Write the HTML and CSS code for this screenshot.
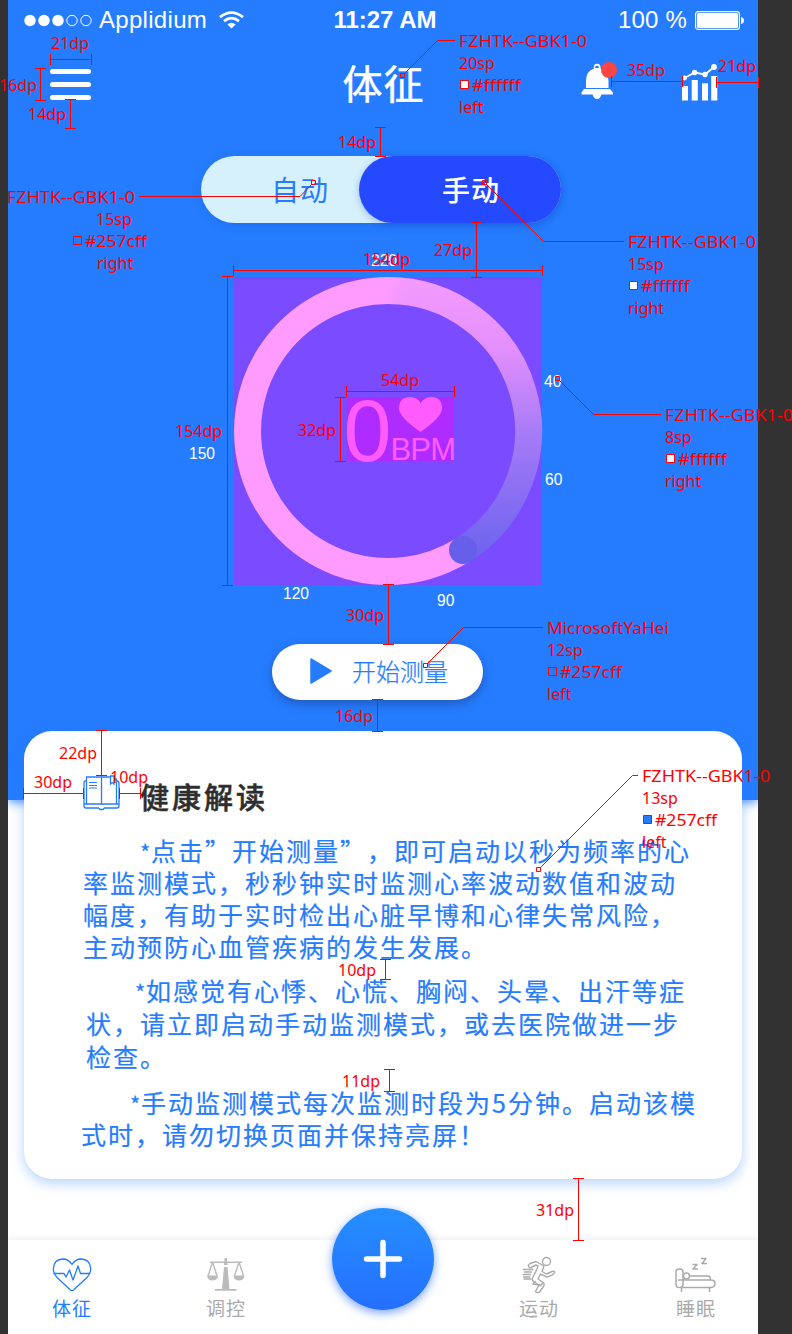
FILE: index.html
```html
<!DOCTYPE html>
<html lang="zh-CN">
<head>
<meta charset="utf-8">
<title>体征</title>
<link rel="stylesheet" href="styles.css">
</head>
<body>
<div class="phone">
  <section class="hero">
    <div class="status">
      <div class="carrier">
        <svg width="69" height="13" viewBox="0 0 69 13"><g fill="#fff"><circle cx="6" cy="6.500" r="5.700"/><circle cx="20" cy="6.500" r="5.700"/><circle cx="34" cy="6.500" r="5.700"/></g><g fill="none" stroke="#fff"><circle cx="48" cy="6.500" r="5.200"/><circle cx="62" cy="6.500" r="5.200"/></g></svg>
        <span>Applidium</span>
        <svg class="wifi" width="25" height="18" viewBox="0 0 25 18"><g fill="none" stroke="#fff" stroke-width="2.7"><path d="M1 6.1Q12.5-3 24 6.1"/><path d="M5 10.1Q12.500 4 20 10.100"/></g><path d="M8.400 13.500Q12.500 10.200 16.600 13.500L12.500 17.500Z" fill="#fff"/></svg>
      </div>
      <strong class="clock">11:27 AM</strong>
      <div class="battery"><span>100 %</span><svg width="49" height="19" viewBox="0 0 49 19"><rect x=".6" y=".6" width="43.800" height="17.800" rx="2.500" fill="none" stroke="#fff" stroke-width="1.200"/><rect x="2" y="2" width="41" height="15" rx="1.500" fill="#fff"/><path d="M46 6Q49 6.500 49 9.500T46 13Z" fill="#fff"/></svg></div>
    </div>
    <header class="nav">
      <div class="menu"><i></i><i></i><i></i></div>
      <h1>体征</h1>
      <div class="actions">
        <svg width="37" height="40" viewBox="0 0 37 40"><path d="M5 26V19Q5 9 13 6.500Q12 1.700 16 1.700T19.500 6.500Q27.500 9 27.500 19V26Z" fill="#fff"/><path d="M14 6Q14 3.500 16 3.500T18 6Z" fill="#257cff"/><path d="M3 27H29L32 30.500V32.500H.5V30.500Z" fill="#fff"/><path d="M11.500 32H20.500Q19.500 37 16 37T11.500 32Z" fill="#fff"/><circle cx="28" cy="8" r="8" fill="#f94545"/></svg>
        <svg width="36" height="40" viewBox="0 0 36 40"><g fill="#fff"><path d="M0 24H6V38.500H0ZM9.700 18H15.800V38.500H9.700ZM20 21.200H26V38.500H20ZM29.200 14H35.300V38.500H29.200Z"/><circle cx="2.500" cy="16" r="2.400"/><circle cx="12.600" cy="10.500" r="2.700"/><circle cx="23" cy="12.500" r="2.700"/><circle cx="32" cy="5" r="2.900"/></g><path d="M2.500 16L12.600 10.500L23 12.500L32 5" fill="none" stroke="#fff" stroke-width="1.800"/></svg>
      </div>
    </header>
    <div class="toggle"><span>自动</span><span class="on">手动</span></div>
    <svg class="gauge" width="400" height="368" viewBox="188 248 400 368">
      <defs><linearGradient id="fade" gradientUnits="userSpaceOnUse" x1="0" y1="277" x2="0" y2="560"><stop offset="0" stop-color="#f59bff"/><stop offset=".25" stop-color="#e38ffc"/><stop offset=".55" stop-color="#a77bf7"/><stop offset=".8" stop-color="#856df3"/><stop offset="1" stop-color="#6c63ee"/></linearGradient>
      <linearGradient id="join"><stop offset="0" stop-color="#ff9bff"/><stop offset="1" stop-color="#ff9bff" stop-opacity="0"/></linearGradient></defs>
      <rect x="234" y="277" width="308" height="308" fill="#7b4bff"/>
      <path d="M462.900 549.900A140.500 140.500 0 1 1 388 290.500" fill="none" stroke="#ff9bff" stroke-width="27"/>
      <path d="M386 290.510A140.500 140.500 0 0 1 462.900 549.900" fill="none" stroke="url(#fade)" stroke-width="27"/>
      <rect x="384" y="277.500" width="19" height="26.500" fill="url(#join)"/>
      <circle cx="463" cy="550" r="14" fill="#675eea"/>
      <rect x="347" y="397" width="107" height="64" fill="#ae2cff"/>
      <text class="zero" x="343.500" y="460.500" textLength="48" lengthAdjust="spacingAndGlyphs">0</text>
      <path d="M420.500 432Q399 417 399 408.500Q399 397 410 397Q418 397 420.500 403.500Q424 397 431 397Q442 397 442 408.500Q442 417 420.500 432Z" fill="#ff5bff"/>
      <text class="bpm" x="390.500" y="460" textLength="65.500">BPM</text>
      <g class="scale"><text x="371" y="266">220</text><text x="544" y="386.500">40</text><text x="545" y="485">60</text><text x="437" y="605.500">90</text><text x="283" y="599">120</text><text x="189" y="459">150</text></g>
    </svg>
    <div class="start"><svg width="22" height="26" viewBox="0 0 22 26"><path d="M1 1L21 13L1 25Z" fill="#257cff" stroke="#257cff" stroke-width="1.500" stroke-linejoin="round"/></svg><span>开始测量</span></div>
  </section>

  <article class="card">
    <h2><svg width="37" height="36" viewBox="0 0 37 36"><g fill="none" stroke="#257cff" stroke-width="1.300"><path d="M3.500 6H2.500Q1 6 1 8V31Q1 33 3 33H15.500L17 34.500H20L21.500 33H34Q36 33 36 31V8Q36 6 34 6"/><path d="M3.500 2H18.500V29H3.500ZM18.500 2H27M31 4H33.500V29H18.500M1 29H36"/><path d="M27.500 1H31V9L29.200 7.500L27.500 9Z"/><path d="M6 7.500H14M6 10.500H14M6 13H14" stroke-width="1"/></g></svg><span>健康解读</span></h2>
    <p class="p1"><b>*</b>点击”开始测量”，即可启动以秒为频率的心<br>率监测模式，秒秒钟实时监测心率波动数值和波动<br>幅度，有助于实时检出心脏早博和心律失常风险，<br>主动预防心血管疾病的发生发展。</p>
    <p class="p2"><b>*</b>如感觉有心悸、心慌、胸闷、头晕、出汗等症<br>状，请立即启动手动监测模式，或去医院做进一步<br>检查。</p>
    <p class="p3"><b>*</b>手动监测模式每次监测时段为5分钟。启动该模<br>式时，请勿切换页面并保持亮屏！</p>
  </article>

  <nav class="tabs">
    <div class="tab active"><svg width="40" height="36" viewBox="0 0 40 36"><g fill="none" stroke="#257cff" stroke-width="1.300" stroke-linejoin="round"><path d="M20 7.500Q16.500 2 11 2Q1.500 2.500 1.300 12Q1.500 17 5 20.500L18.500 33Q20 34 21.500 33L35 20.500Q38.500 17 38.700 12Q38.500 2.500 29 2Q23.500 2 20 7.500Z"/><path d="M1.500 16.500H12L14 20L17.500 13L21 23L26 9L28.500 16.500H38"/></g></svg><span>体征</span></div>
    <div class="tab balance"><svg width="40" height="36" viewBox="0 0 40 36"><g fill="#bbb"><path d="M18.500 1H21V4.500H36V6H21.500V8H18V6H4V4.500H18.500ZM18 10H21.500L23.500 32H30.500V33.800H9V32H16Z"/><path d="M1 18.500H12Q11.500 23.500 6.500 23.500T1 18.500ZM27.500 18.500H38.500Q38 23.500 33 23.500T27.500 18.500Z"/></g><path d="M6.500 5L2 19M6.500 5L11 19M33 5L28.500 19M33 5L37.500 19" fill="none" stroke="#bbb" stroke-width="1.400"/></svg><span>调控</span></div>
    <div class="fab"><svg width="40" height="40" viewBox="0 0 40 40"><path d="M20 3.500V36.500M3.500 20H36.500" stroke="#fff" stroke-width="5.500" stroke-linecap="round"/></svg></div>
    <div class="tab sport"><svg width="40" height="38" viewBox="0 0 40 38"><g fill="none" stroke="#aaa" stroke-width="1.400" stroke-linejoin="round" stroke-linecap="round"><circle cx="27.500" cy="5.500" r="4"/><path d="M10 11Q8.500 9 11 7.500L17 5.500L24 9.500Q25.500 11 24 12.500L23 15.500L27.500 18L33 15.500Q36 14.500 35.500 16.500Q35 18.500 28 21.200L21.500 18L19 23L24.500 27Q26 28.500 24.500 30.500L20.500 36Q17.500 37.500 16.500 35.500L20 29L14.500 25.500Q12.500 24 14 21L18 13L19 9.800L17 9L12 11.500Q10.500 12 10 11Z"/><path d="M16 25.500L14 28L21 29M24 27L21 30M4.500 13.500H14M5.500 16H12.500M4.500 18.500H11.500M4.500 21H11M5 23H12"/></g></svg><span>运动</span></div>
    <div class="tab sleep"><svg width="42" height="38" viewBox="0 0 42 38"><g fill="none" stroke="#aaa" stroke-width="1.500" stroke-linejoin="round"><rect x="1" y="13" width="7" height="18.500" rx="3.300"/><circle cx="11.500" cy="20" r="3"/><path d="M14.500 20H33Q35.500 20 35.500 24M3 24H36Q40 24 40 27.500T36 31.500H6M6.500 31.500V36M34.500 31.500V36M17.500 8.500H22L18 13H23M26 2.500H31L27 7.500H32"/></g></svg><span>睡眠</span></div>
  </nav>
</div>

<svg class="notes" width="792" height="1334" viewBox="0 0 792 1334">
  <g class="rule">
    <path d="M50.500 59.500H91.500M50.500 54V65M91.500 54V65M40.500 68.500V100.500M35 68.500H46M35 100.500H46M70.500 99.500V128.500M65 99.500H76M65 128.500H76"/>
    <path d="M611.500 81.500H682.500M611.500 76V87M682.500 76V87M716.500 82.500H758.500M716.500 77V88M758.500 77V88"/>
    <path d="M380.500 127.500V156.500M375 127.500H386M375 156.500H386M476.500 222.500V277.500M471 222.500H482M471 277.500H482"/>
    <path d="M233.500 270.500H542.500M233.500 265V276M542.500 265V276M227.500 276.500V585.500M222 276.500H233M222 585.500H233"/>
    <path d="M346.500 391.500H454.500M346.500 386V397M454.500 386V397M340.500 397.500V461.500M335 397.500H346M335 461.500H346"/>
    <path d="M388.500 584.500V644.500M383 584.500H394M383 644.500H394M377.500 699.500V731.500M372 699.500H383M372 731.500H383"/>
    <path d="M101.500 730.500V775.500M96 730.500H107M96 775.500H107M23.500 793.500H83.500M23.500 788V799M83.500 788V799M119.500 793.500H140.500M119.500 788V799M140.500 788V799"/>
    <path d="M385.500 959.500V979.500M380 959.500H391M380 979.500H391M389.500 1069.500V1091.500M384 1069.500H395M384 1091.500H395M578.500 1178.500V1240.500M573 1178.500H584M573 1240.500H584"/>
    <path d="M455 40.500H437.500L404 74M139 196.500H300L312 184M624 241.500H543.500L486 184M661 414.500H593.500L559 380M543 627.500H463.500L427 664M638 775.500H632.500L540 868"/>
    <path d="M400.500 73.500h4v4h-4ZM311.500 180.500h4v4h-4ZM482.500 180.500h4v4h-4ZM555.500 376.500h4v4h-4ZM423.500 663.500h4v4h-4ZM536.500 867.500h4v4h-4Z"/>
    <g fill="#fff"><path d="M460.500 80.500h8v8h-8ZM629.500 281.500h8v8h-8ZM666.500 454.500h8v8h-8Z"/></g>
    <g fill="#257cff"><path d="M73.500 236.500h8v8h-8ZM548.500 667.500h8v8h-8ZM643.500 815.500h8v8h-8Z"/></g>
  </g>
  <g class="dims">
    <text x="51" y="49">21dp</text><text x="-1" y="91">16dp</text><text x="28" y="120">14dp</text>
    <text x="627" y="76">35dp</text><text x="718" y="72">21dp</text><text x="338" y="148">14dp</text>
    <text x="434" y="256">27dp</text><text x="363" y="265">154dp</text><text x="175" y="437">154dp</text>
    <text x="381" y="386">54dp</text><text x="298" y="436">32dp</text><text x="346" y="621">30dp</text>
    <text x="335" y="722">16dp</text><text x="59" y="759">22dp</text><text x="34" y="788">30dp</text><text x="110" y="783">10dp</text>
    <text x="338" y="976">10dp</text><text x="342" y="1087">11dp</text><text x="536" y="1216">31dp</text>
    <text x="459" y="47" textLength="128" lengthAdjust="spacingAndGlyphs">FZHTK--GBK1-0</text><text x="459" y="69">20sp</text><text x="472" y="91" textLength="49" lengthAdjust="spacingAndGlyphs">#ffffff</text><text x="459" y="113">left</text>
    <text x="7" y="203" textLength="128" lengthAdjust="spacingAndGlyphs">FZHTK--GBK1-0</text><text x="96" y="225">15sp</text><text x="85" y="247" textLength="62" lengthAdjust="spacingAndGlyphs">#257cff</text><text x="97" y="269">right</text>
    <text x="628" y="248" textLength="128" lengthAdjust="spacingAndGlyphs">FZHTK--GBK1-0</text><text x="628" y="270">15sp</text><text x="641" y="292" textLength="49" lengthAdjust="spacingAndGlyphs">#ffffff</text><text x="628" y="314">right</text>
    <text x="665" y="421" textLength="128" lengthAdjust="spacingAndGlyphs">FZHTK--GBK1-0</text><text x="665" y="443">8sp</text><text x="678" y="465" textLength="49" lengthAdjust="spacingAndGlyphs">#ffffff</text><text x="665" y="487">right</text>
    <text x="547" y="634" textLength="122" lengthAdjust="spacingAndGlyphs">MicrosoftYaHei</text><text x="547" y="656">12sp</text><text x="560" y="678" textLength="62" lengthAdjust="spacingAndGlyphs">#257cff</text><text x="547" y="700">left</text>
    <text x="642" y="782" textLength="128" lengthAdjust="spacingAndGlyphs">FZHTK--GBK1-0</text><text x="642" y="804">13sp</text><text x="655" y="826" textLength="62" lengthAdjust="spacingAndGlyphs">#257cff</text><text x="642" y="848">left</text>
  </g>
</svg>
</body>
</html>
```
FILE: styles.css
```css
* { box-sizing: border-box; }
body {
  margin: 0;
  background: #323232;
  font-family: "Noto Sans CJK SC", sans-serif;
  text-spacing-trim: space-all;
  overflow: hidden;
}
svg { display: block; flex: none; }
.phone {
  width: 750px;
  height: 1334px;
  margin-left: 8px;
  background: #fff;
  overflow: hidden;
  display: flex;
  flex-direction: column;
}
.hero {
  height: 800px;
  flex: none;
  background: #257cff;
  box-shadow: 0 3px 9px rgba(37, 124, 255, .75);
  color: #fff;
  display: flex;
  flex-direction: column;
}
.status {
  height: 40px;
  padding: 0 14px 0 16px;
  display: grid;
  grid-template-columns: 1fr auto 1fr;
  align-items: center;
  font: 24px/40px "Liberation Sans", sans-serif;
}
.carrier, .battery { display: flex; align-items: center; }
.carrier span { margin-left: 6px; letter-spacing: .3px; }
.wifi { margin-left: 12px; }
.clock { margin-left: 2px; letter-spacing: 0; }
.battery { justify-content: flex-end; gap: 8px; letter-spacing: .2px; }
.nav {
  height: 116px;
  padding: 22px 40px 0 42px;
  display: grid;
  grid-template-columns: 1fr auto 1fr;
  align-items: start;
}
.menu { display: flex; flex-direction: column; gap: 8px; padding-top: 7px; }
.menu i { width: 41px; height: 5px; border-radius: 3px; background: #fff; }
.nav h1 {
  margin: -3px 0 0 -1px;
  font-size: 40px;
  line-height: 46px;
  font-weight: 400;
  letter-spacing: 1px;
  -webkit-text-stroke: .5px #fff;
}
.actions { display: flex; gap: 64px; justify-content: flex-end; }
.toggle {
  width: 360px;
  height: 67px;
  margin-left: 193px;
  border-radius: 34px;
  background: #d6f0fc;
  box-shadow: 0 2px 8px rgba(20, 70, 180, .22);
  display: flex;
  font-size: 28px;
  line-height: 66px;
  letter-spacing: 1px;
}
.toggle span { flex: 1; padding-left: 70px; color: #257cff; }
.toggle .on {
  flex: 0 0 202px;
  padding-left: 83px;
  border-radius: 34px;
  background: #2449ff;
  box-shadow: 0 2px 7px rgba(20, 60, 170, .3);
  color: #fff;
  font-weight: 500;
}
.gauge { margin: 25px 0 0 180px; font-family: "Liberation Sans", sans-serif; }
.zero { font-size: 88px; fill: #ff5bff; }
.bpm { font-size: 31px; fill: #ff5bff; }
.scale { font-size: 15.6px; fill: #fff; }
.start {
  width: 211px;
  height: 56px;
  margin: 28px 0 0 264px;
  padding-left: 38px;
  display: flex;
  align-items: center;
  gap: 20px;
  border-radius: 28px;
  background: #fff;
  box-shadow: 0 4px 10px rgba(30, 60, 130, .5);
  color: #257cff;
  font-size: 24px;
  font-weight: 300;
}
.start svg { margin-top: -2px; }
.start span { margin-top: -4px; -webkit-text-stroke: .25px #257cff; }
.card {
  width: 718px;
  height: 448px;
  flex: none;
  margin: -69px 0 0 16px;
  padding-top: 44px;
  border-radius: 28px;
  background: #fff;
  box-shadow: 0 4px 13px rgba(37, 124, 255, .35);
  color: #257cff;
  font-size: 25px;
  letter-spacing: 2px;
  white-space: nowrap;
  position: relative;
}
.card h2 {
  margin: 0;
  height: 44px;
  padding-left: 59px;
  display: flex;
  gap: 20px;
  color: #2e2e2e;
  font-size: 29px;
  line-height: 42px;
  letter-spacing: 3px;
  font-weight: 500;
  -webkit-text-stroke: .5px #2e2e2e;
}
.card p { margin: 0; line-height: 32px; -webkit-text-stroke: .2px #257cff; }
.card b {
  display: inline-block;
  width: 11px;
  font-weight: 400;
  font-size: 22px;
  letter-spacing: 0;
  line-height: 20px;
  text-indent: 0;
}
.card .p1 { margin-top: 15px; padding-left: 59px; text-indent: 57px; }
.card .p2 { margin-top: 12px; padding-left: 62px; text-indent: 49px; line-height: 33px; }
.card .p3 { margin-top: 13px; padding-left: 57px; text-indent: 49px; }
.tabs {
  height: 94px;
  margin-top: 61px;
  padding-left: 24px;
  display: flex;
  background: #fff;
  box-shadow: 0 -2px 5px rgba(0, 0, 0, .06);
}
.tab {
  width: 80px;
  padding-top: 16px;
  display: flex;
  flex-direction: column;
  align-items: center;
  color: #aaa;
  font-size: 19px;
  letter-spacing: 1px;
}
.tab svg { height: 38px; margin-left: -1px; }
.tab span { line-height: 28px; }
.tab.active { color: #257cff; }
.balance { margin-left: 74px; }
.sport { margin-left: 65px; }
.sleep { margin-left: 77px; }
.fab {
  width: 102px;
  height: 102px;
  margin: -32px 0 0 66px;
  border-radius: 50%;
  background: linear-gradient(#258fff, #256fff);
  box-shadow: 0 3px 10px rgba(37, 100, 255, .6);
  display: grid;
  place-items: center;
}
.notes { position: absolute; left: 0; top: 0; }
.rule { fill: none; stroke: #f00; stroke-width: 1; }
.dims {
  fill: #f00;
  font: 16px "Noto Sans", sans-serif;
  font-variant-ligatures: none;
}
```
